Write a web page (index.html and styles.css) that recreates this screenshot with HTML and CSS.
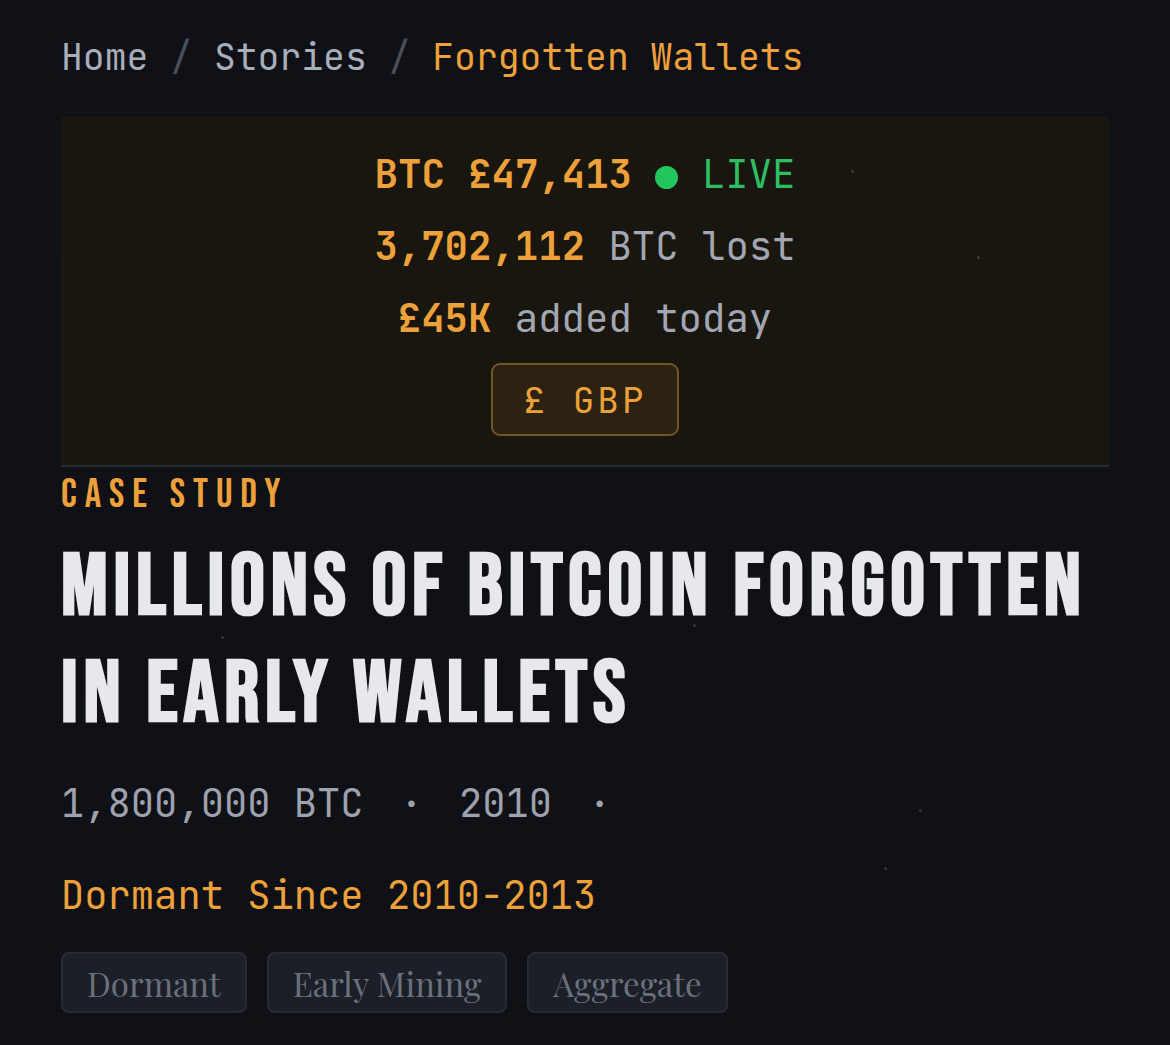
FILE: index.html
```html
<!DOCTYPE html>
<html lang="en">
<head>
    <meta charset="UTF-8">
    <meta name="viewport" content="width=device-width, initial-scale=1.0">
    <title>Forgotten Wallets - Case Study</title>
    <link rel="stylesheet" href="styles.css">
</head>
<body>
    <div class="page">
        <nav class="breadcrumb"><a href="#">Home</a> <span class="sep">/</span> <a href="#">Stories</a> <span class="sep">/</span> <span class="current">Forgotten Wallets</span></nav>

        <div class="ticker">
            <div class="ticker-line"><b>BTC £47,413</b> <span class="live-dot"></span> <span class="live">LIVE</span></div>
            <div class="ticker-line"><b>3,702,112</b> BTC lost</div>
            <div class="ticker-line"><b>£45K</b> added today</div>
            <button class="currency-btn">£ GBP</button>
        </div>

        <article class="story">
            <div class="kicker">Case Study</div>
            <h1>Millions of Bitcoin Forgotten in Early Wallets</h1>

            <div class="meta">
                <span>1,800,000 BTC</span>
                <span class="dot">·</span>
                <span>2010</span>
                <span class="dot">·</span>
            </div>

            <p class="status">Dormant Since 2010-2013</p>

            <div class="tags">
                <span class="tag">Dormant</span>
                <span class="tag">Early Mining</span>
                <span class="tag">Aggregate</span>
            </div>
        </article>
    </div>

    <!-- floating embers -->
    <div class="embers">
        <i style="left: 221px; top: 636px;"></i>
        <i style="left: 693px; top: 624px;"></i>
        <i style="left: 851px; top: 170px;"></i>
        <i style="left: 977px; top: 256px;"></i>
        <i style="left: 919px; top: 809px;"></i>
        <i style="left: 884px; top: 867px;"></i>
    </div>
</body>
</html>
```

FILE: styles.css
```css
body {
    margin: 0;
    background-color: #0e1016;
    background-image: repeating-linear-gradient(0deg, rgba(255, 255, 255, 0.012) 0, rgba(255, 255, 255, 0.012) 1px, transparent 1px, transparent 4px);
    color: #a7abb7;
    font-family: "JetBrains Mono", "DejaVu Sans Mono", monospace;
    min-height: 100vh;
}
.page {
    width: 1048px;
    margin-left: 61px;
    padding-top: 29px;
}
.breadcrumb {
    font-size: 36.4px;
    line-height: 56px;
    color: #a9aebb;
}
.breadcrumb a {
    color: #a9aebb;
    text-decoration: none;
}
.breadcrumb .sep {
    color: #4a4f5c;
}
.breadcrumb .current {
    color: #eea13a;
}
.ticker {
    margin-top: 32px;
    background-color: #18160f;
    border-bottom: 2px solid #262a33;
    padding: 21px 0 29px;
    text-align: center;
}
.ticker-line {
    font-size: 39px;
    line-height: 72px;
    color: #a3a7b3;
}
.ticker-line b {
    color: #eea13a;
    font-weight: 700;
}
.live-dot {
    display: inline-block;
    width: 23px;
    height: 23px;
    border-radius: 50%;
    background-color: #22c55e;
    vertical-align: -1px;
}
.live {
    color: #2fbf62;
}
.currency-btn {
    margin-top: 9px;
    width: 188px;
    height: 73px;
    background-color: #2b2212;
    border: 2px solid #745526;
    border-radius: 9px;
    color: #eea13a;
    font-family: inherit;
    font-size: 36px;
    letter-spacing: 3px;
    cursor: pointer;
}
.kicker {
    margin-top: 8px;
    font-family: "Bebas Neue", "Open Sans", sans-serif;
    font-weight: 400;
    font-size: 41px;
    line-height: 40px;
    letter-spacing: 8px;
    text-transform: uppercase;
    color: #eea13a;
}
h1 {
    margin: 20px 0 0;
    font-family: "Bebas Neue", "Open Sans", sans-serif;
    font-weight: 700;
    font-size: 87px;
    line-height: 107px;
    letter-spacing: 5.8px;
    text-transform: uppercase;
    color: #e7e8ed;
}
.meta {
    display: flex;
    gap: 36px;
    margin-top: 26px;
    font-size: 38.8px;
    line-height: 56px;
    color: #9ea2ae;
}
.status {
    margin: 36px 0 0;
    font-size: 38.8px;
    line-height: 56px;
    color: #eea13a;
}
.tags {
    display: flex;
    gap: 20px;
    margin-top: 29px;
}
.tag {
    height: 57px;
    padding: 0 24px;
    display: flex;
    align-items: center;
    background-color: #1b1f27;
    border: 2px solid #262b35;
    border-radius: 8px;
    font-family: "Playfair Display", "Liberation Serif", serif;
    font-size: 33px;
    color: #6b707d;
}
.embers i {
    position: absolute;
    width: 3px;
    height: 3px;
    border-radius: 50%;
    background-color: rgba(238, 161, 58, 0.25);
}
```
